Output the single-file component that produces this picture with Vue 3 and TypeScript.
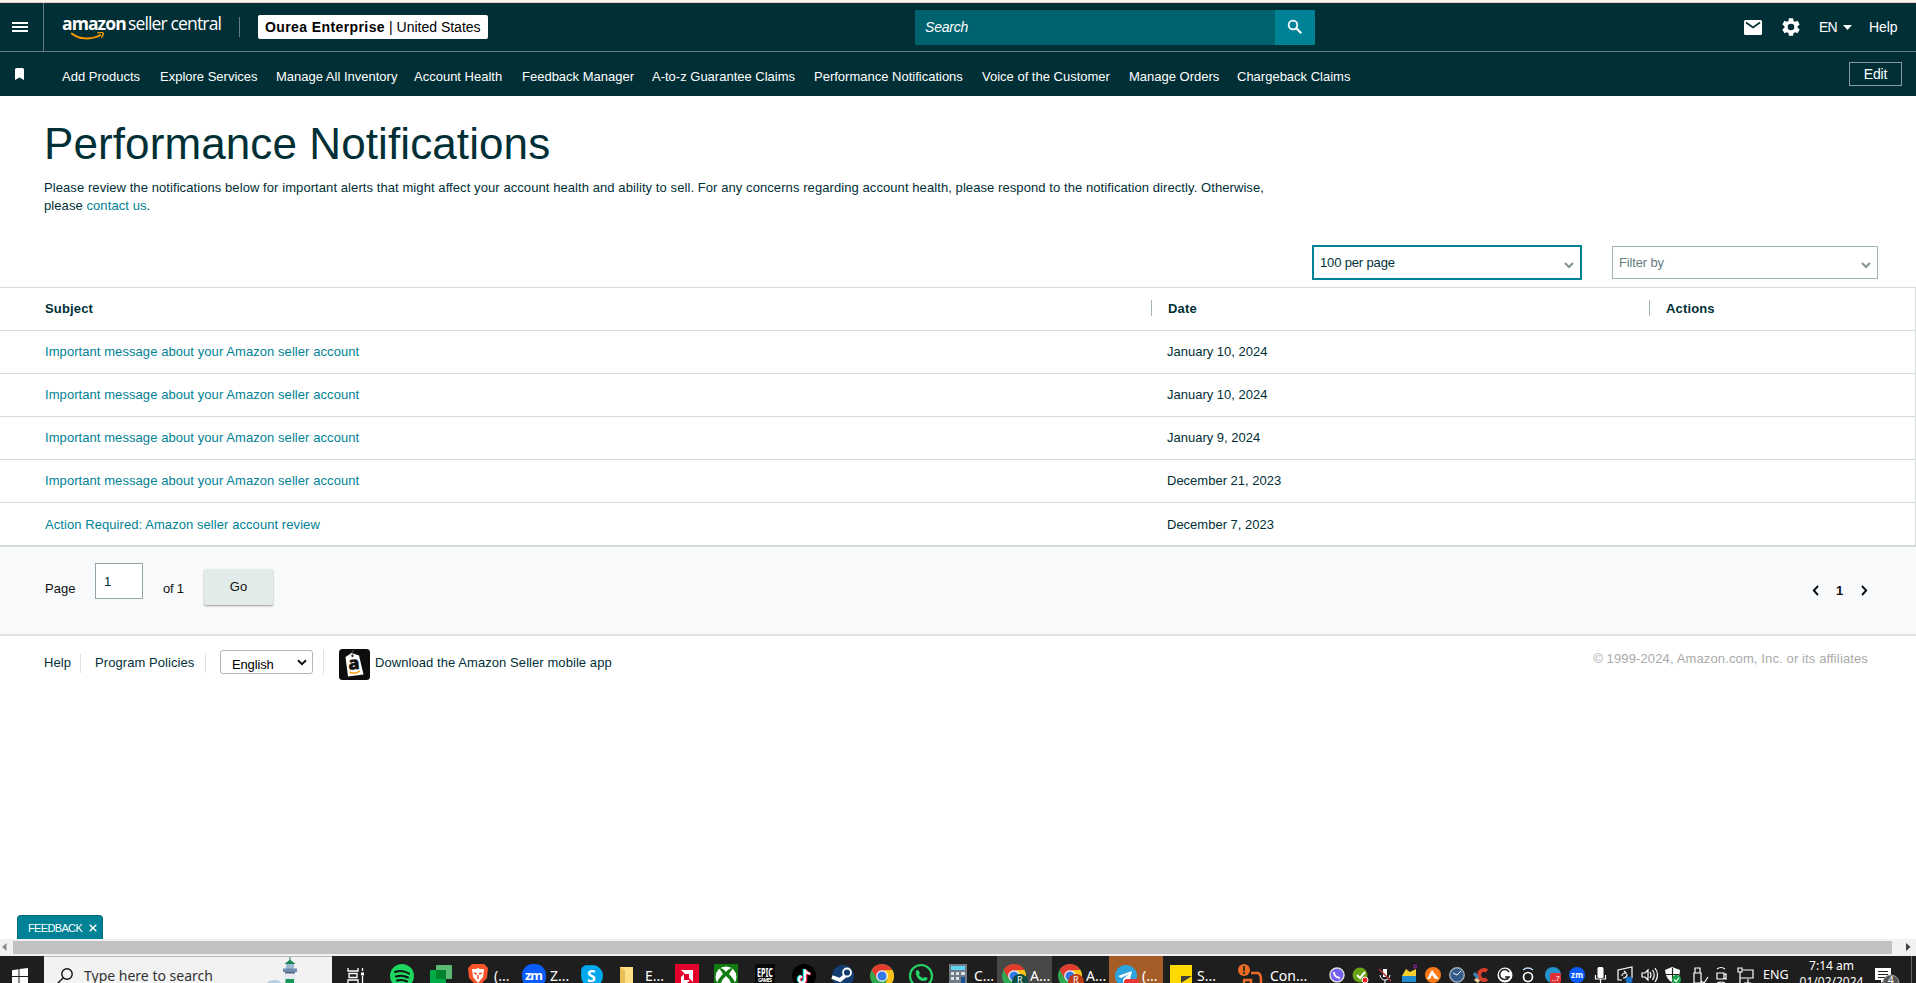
<script setup lang="ts">
const navLinks: string[] = [
  'Add Products', 'Explore Services', 'Manage All Inventory', 'Account Health', 'Feedback Manager',
  'A-to-z Guarantee Claims', 'Performance Notifications', 'Voice of the Customer', 'Manage Orders', 'Chargeback Claims',
]
interface Notice { subject: string; date: string }
const important = 'Important message about your Amazon seller account'
const notices: Notice[] = [
  { subject: important, date: 'January 10, 2024' },
  { subject: important, date: 'January 10, 2024' },
  { subject: important, date: 'January 9, 2024' },
  { subject: important, date: 'December 21, 2023' },
  { subject: 'Action Required: Amazon seller account review', date: 'December 7, 2023' },
]
</script>

<template>
  <div class="screen">
    <div class="strip"></div>
    <header class="top">
      <div class="menu"><svg width="16" height="10" viewBox="0 0 16 10"><path d="M0 1h16M0 5h16M0 9h16" stroke="#fff" stroke-width="2" /></svg></div>
      <div class="logo">
        <div class="logo-text"><b>amazon</b><span>seller central</span></div>
        <svg class="smile" width="34" height="8" viewBox="0 0 34 8"><path d="M0 1C8 7.800 21 8 30 2.800" fill="none" stroke="#f90" stroke-width="1.900" /><path d="M26.500 1c2.500-.7 5-.8 5.500-.2.5.7-.2 3.200-1.800 5" fill="none" stroke="#f90" stroke-width="1.300" /></svg>
      </div>
      <i class="logo-divider"></i>
      <div class="account"><b>Ourea Enterprise</b><span>| United States</span></div>
      <div class="search">
        <span>Search</span>
        <div class="search-button"><svg width="16" height="16" viewBox="0 0 16 16"><circle cx="6" cy="6" r="4.300" fill="none" stroke="#fff" stroke-width="1.800" /><path d="m9.300 9.300 5 5" stroke="#fff" stroke-width="2.200" /></svg></div>
      </div>
      <div class="top-right">
        <svg class="mail" width="18" height="15" viewBox="0 0 18 15"><rect width="18" height="15" rx="1.500" fill="#fff" /><path d="m2 2.500 7 5 7-5" fill="none" stroke="#002f36" stroke-width="1.700" /></svg>
        <svg class="gear" width="22" height="22" viewBox="0 0 24 24"><path fill="#fff" d="M19.140 12.940c.04-.3.060-.61.060-.94s-.02-.64-.07-.94l2.030-1.580a.49.49 0 0 0 .12-.61l-1.920-3.320a.49.49 0 0 0-.59-.22l-2.390.96a7 7 0 0 0-1.620-.94L14.400 2.810a.48.48 0 0 0-.48-.41h-3.840a.47.47 0 0 0-.47.41l-.36 2.540c-.59.24-1.130.57-1.620.94l-2.390-.96a.48.48 0 0 0-.59.22L2.740 8.870a.47.47 0 0 0 .12.61l2.030 1.580a6 6 0 0 0-.02 1.880l-2.030 1.580a.49.49 0 0 0-.12.61l1.920 3.320c.12.220.37.290.59.220l2.390-.96c.5.380 1.030.7 1.620.94l.36 2.540c.05.240.24.410.48.410h3.840c.24 0 .44-.17.470-.41l.36-2.540a7 7 0 0 0 1.620-.94l2.390.96c.22.080.47 0 .59-.22l1.920-3.320a.47.47 0 0 0-.12-.61zM12 15.600a3.600 3.600 0 1 1 0-7.200 3.600 3.600 0 0 1 0 7.200" /></svg>
        <span class="lang">EN</span>
        <svg class="caret" width="9" height="5" viewBox="0 0 9 5"><path d="M0 0h9L4.500 5z" fill="#fff" /></svg>
        <span class="help">Help</span>
      </div>
    </header>
    <nav class="nav">
      <svg class="bookmark" width="9" height="12" viewBox="0 0 9 12"><path d="M0 1.500Q0 0 1.500 0h6Q9 0 9 1.500V12L4.500 9.500 0 12z" fill="#fff" /></svg>
      <div class="links"><a v-for="l in navLinks" :key="l">{{ l }}</a></div>
      <div class="edit">Edit</div>
    </nav>

    <main>
      <h1>Performance Notifications</h1>
      <p class="intro">Please review the notifications below for important alerts that might affect your account health and ability to sell. For any concerns regarding account health, please respond to the notification directly. Otherwise, please <a>contact us</a>.</p>
      <div class="filters">
        <div class="select active"><span>100 per page</span><svg width="10" height="7" viewBox="0 0 10 7"><path d="m1 1 4 4 4-4" fill="none" stroke="#879596" stroke-width="2.200" /></svg></div>
        <div class="select"><span>Filter by</span><svg width="10" height="7" viewBox="0 0 10 7"><path d="m1 1 4 4 4-4" fill="none" stroke="#879596" stroke-width="2.200" /></svg></div>
      </div>
      <div class="table">
        <div class="row head"><span>Subject</span><span class="col">Date</span><span class="col">Actions</span></div>
        <div v-for="(n, i) in notices" :key="i" class="row"><a>{{ n.subject }}</a><span class="date">{{ n.date }}</span><span></span></div>
      </div>
      <div class="pager">
        <span class="page">Page</span><div class="page-input">1</div><span class="of">of 1</span><div class="go">Go</div>
        <div class="pages">
          <svg width="7" height="11" viewBox="0 0 7 11"><path d="M6 1 1.800 5.500 6 10" fill="none" stroke="#000a10" stroke-width="1.900" /></svg>
          <b>1</b>
          <svg width="7" height="11" viewBox="0 0 7 11"><path d="m1 1 4.200 4.500L1 10" fill="none" stroke="#000a10" stroke-width="1.900" /></svg>
        </div>
      </div>
    </main>

    <footer class="footer">
      <span class="f-help">Help</span><i></i><span class="f-policy">Program Policies</span><i></i>
      <div class="language"><span>English</span><svg width="10" height="7" viewBox="0 0 10 7"><path d="m1 1.200 4 4 4-4" fill="none" stroke="#111" stroke-width="2" /></svg></div>
      <i class="tall"></i>
      <svg class="app" width="31" height="31" viewBox="0 0 31 31"><rect width="31" height="31" rx="3.500" fill="#0d0d0d" /><path d="m6.500 8 6-4 7.500 2.500 4.500 19L9 27.500z" fill="#fff" /><circle cx="13.500" cy="6.800" r="1.200" fill="#222" /><path d="M13.500 6.500Q12 2 14.500 1" fill="none" stroke="#777" stroke-width=".8" /><text x="9.300" y="20.500" font-family="Open Sans" font-size="18" font-weight="800" fill="#111" stroke="#111" stroke-width=".4" transform="rotate(-5 14 16)">a</text><path d="M10.500 22.800q5 3.300 10.500-.8" fill="none" stroke="#f90" stroke-width="1.500" /></svg>
      <span class="download">Download the Amazon Seller mobile app</span>
      <span class="copyright">© 1999-2024, Amazon.com, Inc. or its affiliates</span>
    </footer>

    <div class="feedback"><span>FEEDBACK</span><svg width="8" height="8" viewBox="0 0 8 8"><path d="m.7.7 6.600 6.600m0-6.600L.7 7.300" stroke="#fff" stroke-width="1.400" /></svg></div>
    <div class="scrollbar">
      <svg width="13" height="17" viewBox="0 0 13 17"><path d="M6.500 4v8L2 8z" fill="#8b8b8b" /></svg>
      <div class="thumb"></div>
      <svg width="24" height="17" viewBox="0 0 24 17"><path d="M14 4v8l4.500-4z" fill="#404040" /></svg>
    </div>

    <div class="taskbar">
      <div class="start"><svg width="16" height="15" viewBox="0 0 16 15"><path d="M0 2.200 6.500 1.300V8H0zM7.500 1.100 16 0v8H7.500zM0 9h6.500v6H0zM7.500 9H16v6H7.500z" fill="#fff" /></svg></div>
      <div class="win-search">
        <svg width="16" height="17" viewBox="0 0 16 17"><circle cx="10" cy="6" r="5.200" fill="none" stroke="#111" stroke-width="1.400" /><path d="M6.300 9.700 0 16" stroke="#111" stroke-width="1.400" /></svg>
        <span>Type here to search</span>
        <svg class="lighthouse" width="36" height="27" viewBox="0 0 36 27"><ellipse cx="7" cy="26" rx="7" ry="3" fill="#b9cfe2" /><path d="M18 14h10l1 13H17z" fill="#e6ebf3" /><path d="M18.500 22h8.500v5h-8.500z" fill="#16955b" /><path d="M19 7h8v6h-8z" fill="#9db9d4" /><path d="m17.500 7 5-4V0h1v3l5 4z" fill="#128653" /><path d="M16 11.500h14V15H16z" fill="#6c8eac" /><path d="M18 15h10v1.500H18z" fill="#53637c" /></svg>
      </div>
      <svg class="apps" width="975" height="27" viewBox="332 0 975 27" font-family="Noto Sans, sans-serif" font-size="14" fill="#fff">
        <g fill="none" stroke="#fff" stroke-width="1.300"><path d="M348 12v3h10v-3M348 27v-3h10v3M349 17.500h8v4h-8zM362.500 12v3M362.500 20v7" /><path d="M361 16.500h3v3h-3z" fill="#fff" stroke="none" /></g>
        <circle cx="402" cy="20" r="12" fill="#1ed760" /><path d="M395 16q7-2.500 14 1.500M396 20.500q6-2 12 1M397 24.500q5-1.500 10 1" fill="none" stroke="#111" stroke-width="2" stroke-linecap="round" />
        <rect x="436" y="9" width="16" height="14" rx="1" fill="#5bb974" /><rect x="430" y="14" width="16" height="15" rx="1" fill="#00ac47" /><path d="M436 14h10v9h-10z" fill="#00832d" />
        <path d="m468 12 4-4h12l4 4-1 10-9 9-9-9z" fill="#fb542b" /><path d="m472 13 4 0 2-1 2 1 4 0-1 8-5 6-5-6z" fill="#fff" /><path d="m474 17 3 1m5-1-3 1m-1 1v4" stroke="#fb542b" stroke-width="1.500" /><text x="494" y="25">(...</text>
        <rect x="522" y="8" width="24" height="24" rx="11" fill="#0b5cff" /><text x="525" y="23.500" font-size="13" font-weight="700" textLength="18">zm</text><text x="550" y="25">Z...</text>
        <circle cx="592" cy="20" r="11" fill="#00a9ee" /><circle cx="587" cy="15" r="6" fill="#00a9ee" /><text x="587" y="25.500" font-size="16" font-weight="700">S</text>
        <path d="M620 11h13v16h-13z" fill="#ffdf83" /><path d="m620 11 5 3v13h-5z" fill="#eabf59" /><text x="645" y="25">E...</text>
        <path d="M675 8h24v19h-24z" fill="#e4002b" /><path d="M681 14h12v12l-4-4v-4h-4zM681 21l3-3v6h6l-3 3h-6z" fill="#fff" />
        <path d="M714 8h24v19h-24z" fill="#107c10" /><circle cx="726" cy="21" r="10.500" fill="#fff" /><path d="M719 12q4 0 7 4 3-4 7-4l-4 6q5 5 6 9h-4q-1-4-5-7-4 3-5 7h-4q1-4 6-9z" fill="#107c10" />
        <path d="M755 8h20v19h-20z" fill="#090909" /><text x="757" y="20.500" font-size="12" font-weight="700" textLength="16" lengthAdjust="spacingAndGlyphs">EPIC</text><text x="758" y="26" font-size="5" font-weight="700" textLength="14">GAMES</text>
        <circle cx="804" cy="20" r="12" fill="#000" /><g fill="none" stroke-width="2.600"><path d="M804 13v10a3 3 0 1 1-3-3M804 13q1 4 5 4" stroke="#25f4ee" /><path d="M806 14v10a3 3 0 1 1-3-3M806 14q1 4 5 4" stroke="#fe2c55" /><path d="M805 13.500v10a3 3 0 1 1-3-3M805 13.500q1 4 5 4" stroke="#fff" stroke-width="2" /></g>
        <circle cx="843" cy="20" r="11" fill="#143d70" /><path d="m832 21 8 3 6-5" fill="none" stroke="#fff" stroke-width="4" /><circle cx="847" cy="16.500" r="4" fill="#143d70" stroke="#fff" stroke-width="1.800" />
        <g id="chrome"><circle cx="882" cy="20" r="12" fill="#2fa84f" /><path d="M871.600 14a12 12 0 0 1 20.800 0l-10.400 2-5 7z" fill="#e33b2e" /><path d="M892.400 14a12 12 0 0 1-9 18l4-9-3-9z" fill="#fbc116" /><circle cx="882" cy="20" r="5.800" fill="#fff" /><circle cx="882" cy="20" r="4.600" fill="#3478e5" /></g>
        <circle cx="921" cy="20" r="11" fill="none" stroke="#25d366" stroke-width="2.200" /><path d="M916 15q2-3 4 2l-1 2q2 3 4 3l2-1q4 1 2 3-6 3-10-3-2-3-1-6" fill="#25d366" />
        <path d="M949 8h18v19h-18z" fill="#707b84" /><path d="M951 10h14v4h-14z" fill="#5cd5f5" /><path d="M951 16h3v3h-3zm5 0h3v3h-3zm5 0h4v3h-4zm-10 5h3v3h-3zm5 0h3v3h-3z" fill="#dce3e8" /><path d="M961 21h4v6h-4z" fill="#164f92" /><text x="974" y="25">C...</text>
        <path d="M997 0h55v27h-55z" fill="#484847" /><use href="#chrome" x="132" /><circle cx="1020" cy="26" r="8" fill="#0b4d43" /><text x="1017" y="27" font-size="9">R</text><text x="1030" y="25">A...</text>
        <use href="#chrome" x="188" /><circle cx="1076" cy="26" r="8" fill="#bd3b17" /><text x="1073" y="27" font-size="9">R</text><text x="1086" y="25">A...</text>
        <path d="M1109 0h54v27h-54z" fill="#a65c27" /><circle cx="1126" cy="20" r="11" fill="#2ca5df" /><path d="m1118 20 14-5-3 13-4-3-2 2v-4l6-5-8 4z" fill="#fff" /><rect x="1124" y="23" width="15" height="8" rx="3" fill="#ee3539" /><text x="1142" y="25">(...</text>
        <path d="M1170 9h22v18h-22z" fill="#ffd900" /><path d="M1181 27v-7h11z" fill="#413f38" /><text x="1197" y="25">S...</text>
        <circle cx="1244" cy="14" r="6" fill="#ee6b25" /><path d="M1243 10h2v5h-2zm0 6h2v2h-2z" fill="#332" /><path d="M1243 24h8v3M1251 17h7q3 1 3 7v3M1244 27v-3" fill="none" stroke="#ee6b25" stroke-width="2.500" /><text x="1270" y="25">Con...</text>
      </svg>
      <svg class="tray" width="450" height="27" viewBox="1307 0 450 27" font-family="Noto Sans, sans-serif" fill="#fff">
        <circle cx="1337" cy="19" r="7" fill="#7360f2" stroke="#ddd" stroke-width="1.500" /><path d="M1334 16q0 5 6 6" fill="none" stroke="#fff" stroke-width="1.800" />
        <circle cx="1360" cy="19" r="7.500" fill="#67a313" /><path d="m1357 19 3 3 5-6" fill="none" stroke="#fff" stroke-width="2" /><circle cx="1365" cy="24" r="3" fill="#e22" stroke="#fff" />
        <path d="M1383 13h4v8h-4z" /><path d="M1380 19q1 5 5 5t5-5M1385 24v3" fill="none" stroke="#fff" /><path d="m1379 13 12 12" stroke="#bd333c" stroke-width="1.500" />
        <path d="m1402 20 4-7 4 3 6-3v7z" fill="#f6cf2c" /><path d="M1402 20h14v6h-14z" fill="#218bd0" /><circle cx="1415" cy="10.500" r="1.500" fill="none" stroke="#9428b9" />
        <circle cx="1433" cy="19" r="8" fill="#ff7a16" /><path d="m1427 23 5-9 7 9h-4l-3-4-2 4z" />
        <circle cx="1457" cy="19" r="7.200" fill="#315a8b" stroke="#9caab7" stroke-width="1.500" /><path d="m1453 17 4 2 4-4" fill="none" stroke="#fff" />
        <path d="m1474 24 5-5 3 3-4 5z" fill="#ead0a0" /><path d="M1487 15a5 5 0 1 0 0 8" fill="none" stroke="#d63d2b" stroke-width="4" /><path d="m1474 17 4 5" stroke="#3c88bc" stroke-width="3" />
        <circle cx="1505" cy="19" r="7.500" /><path d="M1509 16a5 5 0 1 0 0 5h-4" fill="none" stroke="#222" stroke-width="1.600" />
        <circle cx="1528" cy="21" r="4.500" fill="none" stroke="#fff" stroke-width="1.700" /><path d="M1523 14q5-4 10 0" fill="none" stroke="#b9d4f4" stroke-width="1.500" />
        <circle cx="1553" cy="19" r="8" fill="#2492cb" /><rect x="1550" y="17" width="11" height="10" rx="2" fill="#e42e36" /><text x="1552" y="25" font-size="7">..7</text>
        <circle cx="1577" cy="19" r="8" fill="#0b5cff" /><text x="1571" y="22" font-size="8" font-weight="700" textLength="12">zm</text>
        <rect x="1597.500" y="11" width="6" height="11" rx="1.500" /><path d="M1595.500 19v4h10v-4M1600.500 23v4" fill="none" stroke="#fff" stroke-width="1.200" />
        <g fill="none" stroke="#fff" stroke-width="1.200"><path d="M1622 24h-4V14l14-3v11M1622 20q0-3 4-3l-2-2m3 3q0 4-4 4" /><path d="M1642 17h3l3-3v10l-3-3h-3zM1650 16q2 3 0 6M1652.500 14q3.500 5 0 10M1655 12q5 7 0 14" /><path d="M1694 17h7v10h-7zM1695 12h5v5h-5zM1701 25l3 2 4-6" /><path d="M1717 17h7v6h-7zM1724 19l2-1v5l-2-1M1717 13q4-3 8 0M1717 27q4-2 8 0" /><path d="M1743 14h10v8h-13v-4M1738 12h4v4h-4zM1740 16v11M1744 27h7M1748 23v4" /></g>
        <circle cx="1629" cy="24" r="3.500" fill="#1871c9" />
        <path d="m1665 14 7-3 8 3q0 9-7 13-7-3-8-13" /><path d="M1672.500 12v14M1665 18.500h14" stroke="#222" stroke-width="1.200" /><circle cx="1676.500" cy="23.500" r="4.500" fill="#16a34a" /><path d="m1674 23.500 2 2 3-4" fill="none" stroke="#fff" stroke-width="1.200" />
      </svg>
      <span class="eng">ENG</span>
      <div class="clock"><span>7:14 am</span><span>01/02/2024</span></div>
      <svg class="action" width="41" height="27" viewBox="1875 0 41 27"><path d="M1875 12h16v12h-6l-4 3v-3h-6z" fill="#fff" /><path d="M1878 15.500h10M1878 18.500h10M1878 21.500h7" stroke="#222" /><circle cx="1891" cy="27" r="8" fill="#555" stroke="#999" /><text x="1888" y="28" font-family="Noto Sans" font-size="10" fill="#fff">4</text><path d="M1911.500 0v27" stroke="#666" /></svg>
    </div>
  </div>
</template>

<style>
html, body { margin: 0; background: #fff; overflow: hidden; }
</style>
<style scoped>
* { box-sizing: border-box; }
.screen { width: 1916px; height: 983px; overflow: hidden; display: flex; flex-direction: column; font: 13px/18px "Liberation Sans", Arial, sans-serif; color: #002f36; white-space: nowrap; }
svg { display: block; flex: none; }
.strip { height: 3px; flex: none; background: #fdf3ef; border-bottom: 1px solid #e8cfc5; }
.top { height: 49px; flex: none; display: flex; background: #002f36; border-bottom: 1px solid #687d80; color: #fff; font-size: 14px; }
.menu { width: 44px; border-right: 1px solid #687d80; padding: 19px 0 0 12px; }
.logo { width: 177px; padding: 12px 0 0 18px; }
.logo-text { display: flex; gap: 4px; font: 17.5px/17px "Open Sans", sans-serif; height: 17px; }
.logo-text b { width: 62px; letter-spacing: -0.9px; }
.logo-text span { letter-spacing: -0.85px; }
.smile { margin-left: 9px; }
.logo-divider { width: 1px; height: 20px; margin: 14px 18px 0; background: #687d80; }
.account { width: 230px; height: 24px; margin-top: 12px; padding-left: 7px; display: flex; gap: 4px; border-radius: 2px; background: #fff; color: #000; line-height: 24px; }
.account b { letter-spacing: .4px; }
.search { width: 400px; height: 35px; margin: 7px 0 0 427px; display: flex; justify-content: space-between; background: #00616f; font-style: italic; line-height: 34px; padding-left: 10px; letter-spacing: -.2px; }
.search-button { width: 40px; background: #008296; padding: 9px 0 0 12px; }
.top-right { margin-left: 429px; display: flex; align-items: center; height: 48px; }
.gear { margin-left: 18px; }
.lang { margin-left: 17px; width: 18px; letter-spacing: -.8px; }
.caret { margin-left: 6px; }
.help { margin-left: 17px; letter-spacing: -.1px; }
.nav { height: 44px; flex: none; display: flex; background: #002f36; color: #fff; }
.bookmark { margin: 16px 0 0 15px; }
.links { display: grid; grid-template-columns: 98px 116px 138px 108px 130px 162px 168px 147px 108px auto; margin: 16px 0 0 38px; }
.edit { width: 53px; height: 24px; margin: 10px 14px 0 auto; border: 1px solid #8b9a9c; text-align: center; font-size: 14px; letter-spacing: -.2px; line-height: 22px; }
main { flex: none; }
h1 { margin: 0; padding: 21px 0 0 44px; font-size: 44px; line-height: 54px; font-weight: 400; letter-spacing: .1px; height: 82px; }
.intro { margin: 0; padding: 1px 0 0 44px; width: 1290px; height: 40px; white-space: normal; letter-spacing: .08px; }
.intro a, .row a { color: #008296; }
.filters { height: 69px; padding: 27px 38px 0 0; display: flex; justify-content: flex-end; gap: 30px; align-items: flex-start; letter-spacing: -.15px; }
.select { width: 266px; height: 33px; margin-top: 1px; padding: 0 6px 0 6px; border: 1px solid #a2b3b5; display: flex; justify-content: space-between; align-items: center; color: #687d80; }
.select svg { margin-top: 5px; }
.select.active { width: 270px; height: 35px; margin-top: 0; border: 2px solid #008296; color: #002f36; }
.table { border: 1px solid #d5dbdb; border-left: 0; border-bottom-width: 2px; height: 260px; }
.row { height: 43px; display: grid; grid-template-columns: 1151px 498px 1fr; align-items: center; border-bottom: 1px solid #d5dbdb; letter-spacing: .07px; }
.row:last-child { border-bottom: 0; }
.row > :first-child { padding-left: 45px; }
.head { font-weight: 700; letter-spacing: .15px; }
.col { border-left: 1px solid #a2b3b5; padding-left: 16px; height: 16px; line-height: 18px; margin-top: -3px; }
.date { padding-left: 16px; letter-spacing: 0; }
.pager { height: 89px; background: #f9fafc; border-bottom: 2px solid #dfe3e5; display: flex; color: #111; }
.page { margin: 33px 0 0 45px; width: 50px; }
.page-input { width: 48px; height: 36px; margin-top: 16px; border: 1px solid #95a5a6; background: #fff; padding-left: 8px; line-height: 35px; color: #002f36; }
.of { margin: 33px 0 0 20px; width: 41px; letter-spacing: -.2px; }
.go { width: 69px; height: 36px; margin-top: 22px; background: #e3eaea; border-radius: 2px; box-shadow: 0 1px 2px #999; text-align: center; line-height: 36px; }
.pages { margin: 38px 48px 0 auto; display: flex; gap: 17px; }
.pages b { line-height: 11px; width: 8px; }
.footer { display: flex; flex: none; height: 279px; padding-left: 44px; line-height: 18px; letter-spacing: .07px; }
.footer > span { margin-top: 18px; }
.footer > i { width: 1px; height: 19px; margin-top: 18px; background: #dde2e2; }
.f-help { width: 36px; }
.f-policy { margin-left: 14px; width: 110px; }
.language { width: 93px; height: 24px; margin: 14px 10px 0 14px; border: 1px solid #b5b5b5; border-radius: 3px; padding: 0 5px 0 11px; display: flex; justify-content: space-between; align-items: center; color: #000; letter-spacing: -.15px; }
.language span { margin-top: 4px; height: 17px; overflow: hidden; }
.footer > i.tall { height: 25px; margin-top: 14px; }
.app { margin: 13px 5px 0 15px; }
.footer > .copyright { margin: 14px 48px 0 auto; color: #aaa; letter-spacing: .13px; }
.feedback { width: 86px; height: 24px; flex: none; margin-left: 17px; display: flex; align-items: center; gap: 7px; padding: 1px 0 0 10px; border: 1px solid #006b7c; border-bottom: 0; border-radius: 4px 4px 0 0; background: #008296; color: #fff; font-size: 11px; letter-spacing: -.65px; }
.scrollbar { height: 17px; flex: none; display: flex; background: #f1f1f1; }
.thumb { width: 1879px; height: 13px; margin-top: 2px; background: #c1c1c1; }
.taskbar { height: 27px; flex: none; display: flex; background: #1f1e1e; color: #fff; font-family: "Noto Sans", sans-serif; }
.start { width: 44px; padding: 12px 0 0 12px; }
.win-search { width: 288px; display: flex; background: #f2f2f2; border-top: 1px solid #bbb; color: #333; font-size: 14px; }
.win-search > svg:first-child { margin: 11px 0 0 13px; }
.win-search span { margin: 9px 0 0 11px; width: 183px; line-height: 20px; }
.eng { margin: 10px 0 0 6px; width: 25px; font-size: 12.5px; }
.clock { width: 87px; display: flex; flex-direction: column; align-items: center; font-size: 12px; line-height: 16px; padding-top: 2px; }
</style>
